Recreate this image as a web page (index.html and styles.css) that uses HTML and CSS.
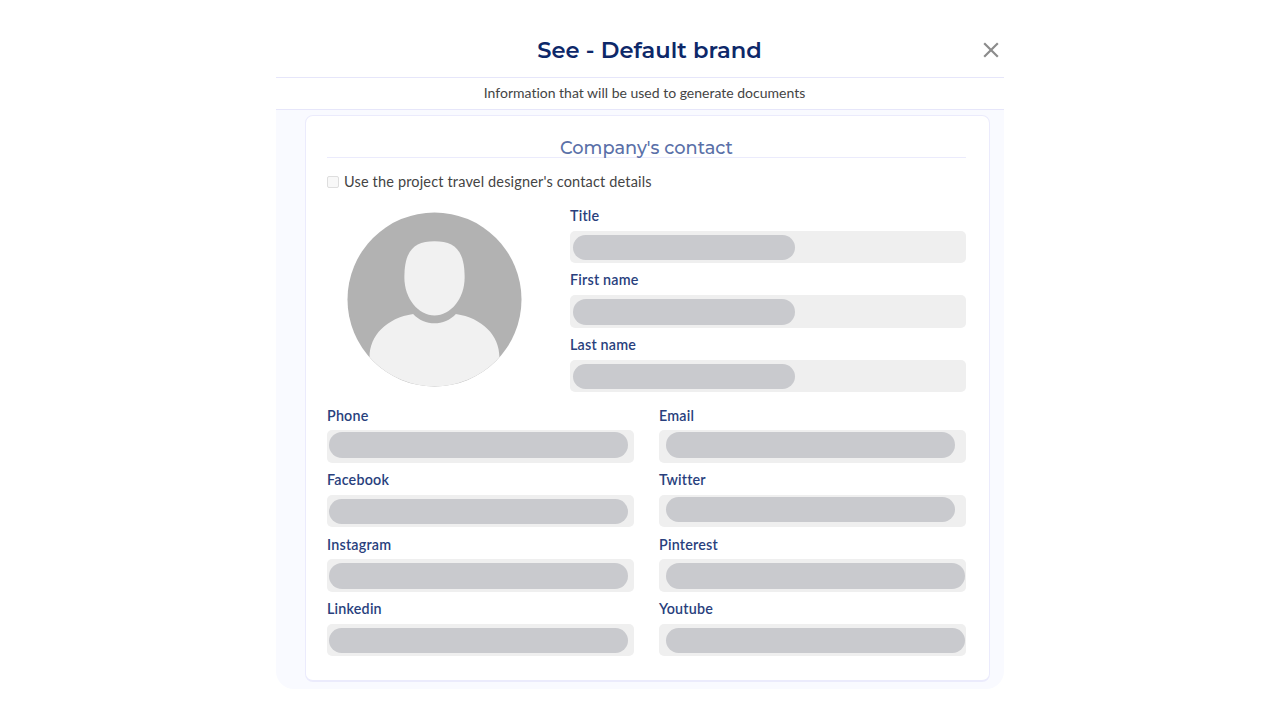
FILE: index.html
```html
<!DOCTYPE html>
<html lang="en">
<head>
    <meta charset="UTF-8">
    <meta name="viewport" content="width=device-width, initial-scale=1.0">
    <title>See - Default brand</title>
    <link rel="stylesheet" href="styles.css">
</head>
<body>

    <div class="modal">
        <div class="modal-header">
            <h1>See - Default brand</h1>
            <button type="button" class="close" aria-label="Close">
                <svg width="16" height="16" viewBox="0 0 16 16">
                    <path d="M1.2 1.2L14.800 14.800M14.800 1.2L1.2 14.800"/>
                </svg>
            </button>
        </div>
        <p class="modal-info"><span>Information that will be used to generate documents</span></p>

        <div class="modal-body">
            <div class="card">
                <h2><span>Company's contact</span></h2>
                <label class="check">
                    <input type="checkbox" disabled>
                    <span>Use the project travel designer's contact details</span>
                </label>

                <!-- Avatar and identity -->
                <div class="identity">
                    <svg class="avatar" viewBox="0 0 176 176">
                        <defs>
                            <clipPath id="round"><circle cx="88" cy="88" r="87.3"/></clipPath>
                        </defs>
                        <circle cx="88" cy="88" r="87.5" fill="#b2b2b2"/>
                        <g clip-path="url(#round)" fill="#f1f1f1">
                            <path d="M88 29.3C108 29.3 118.3 38 118.3 66C118.3 87 104 104 88 104C72 104 57.7 87 57.7 66C57.7 38 68 29.3 88 29.3Z"/>
                            <path d="M66.5 102.5C78 115 98 115 109.5 102.5C136 106.5 153.3 124 153.3 146V176H22.7V146C22.7 124 40 106.5 66.5 102.5Z"/>
                        </g>
                    </svg>
                    <div class="names">
                        <div class="field">
                            <label>Title</label>
                            <div class="input"><span class="value"></span></div>
                        </div>
                        <div class="field">
                            <label>First name</label>
                            <div class="input"><span class="value"></span></div>
                        </div>
                        <div class="field">
                            <label>Last name</label>
                            <div class="input"><span class="value"></span></div>
                        </div>
                    </div>
                </div>

                <!-- Contact and social networks -->
                <div class="contacts">
                    <div class="field">
                        <label>Phone</label>
                        <div class="input high"><span class="value"></span></div>
                    </div>
                    <div class="field right">
                        <label>Email</label>
                        <div class="input high"><span class="value short"></span></div>
                    </div>
                    <div class="field">
                        <label>Facebook</label>
                        <div class="input"><span class="value"></span></div>
                    </div>
                    <div class="field right">
                        <label>Twitter</label>
                        <div class="input high"><span class="value short"></span></div>
                    </div>
                    <div class="field">
                        <label>Instagram</label>
                        <div class="input"><span class="value"></span></div>
                    </div>
                    <div class="field right">
                        <label>Pinterest</label>
                        <div class="input"><span class="value"></span></div>
                    </div>
                    <div class="field">
                        <label>Linkedin</label>
                        <div class="input"><span class="value"></span></div>
                    </div>
                    <div class="field right">
                        <label>Youtube</label>
                        <div class="input"><span class="value"></span></div>
                    </div>
                </div>
            </div>
        </div>
    </div>

</body>
</html>
```
FILE: styles.css
```css
* {
    box-sizing: border-box;
}
body {
    margin: 0;
    background-color: #fff;
    font-family: Lato, "Open Sans", sans-serif;
    font-size: 14px;
    font-variant-ligatures: none;
    color: #444;
}
.modal {
    width: 728px;
    margin: 0 auto;
}
.modal-header {
    display: flex;
    align-items: center;
    height: 78px;
    padding: 22px 5px 0 40px;
    border-bottom: 1px solid #e6e6fa;
}
h1 {
    flex: 1;
    margin: 0;
    text-align: center;
    font-family: Montserrat, Inter, sans-serif;
    font-size: 22.6px;
    font-weight: 600;
    color: #0d2869;
}
.close {
    display: flex;
    padding: 0;
    border: none;
    background: none;
    cursor: pointer;
}
.close path {
    fill: none;
    stroke: #8c8c8c;
    stroke-width: 2.2;
}
.modal-info {
    margin: 0;
    height: 32px;
    padding-left: 9px;
    border-bottom: 1px solid #e6e6fa;
    line-height: 30px;
    text-align: center;
}
.modal-body {
    height: 579px;
    padding: 5px 14px 7px 29px;
    background-color: #f9faff;
    border-radius: 0 0 18px 18px;
}
.card {
    height: 567px;
    padding: 20px 23px 0 21px;
    border: 1px solid #ebebfc;
    border-bottom-width: 2px;
    border-radius: 8px;
    background-color: #fff;
}
h2 {
    margin: 0;
    height: 22px;
    border-bottom: 1px solid #ebebfc;
    line-height: 24px;
    text-align: center;
    font-family: Montserrat, Inter, sans-serif;
    font-size: 17.8px;
    font-weight: 500;
    color: #5a70a8;
}
.check {
    display: flex;
    align-items: center;
    gap: 5px;
    height: 47px;
    margin-bottom: 1px;
    font-size: 14.5px;
    letter-spacing: 0.16px;
}
.check input {
    appearance: none;
    width: 12px;
    height: 12px;
    margin: 0;
    border: 1px solid #dedede;
    border-radius: 2px;
    background-color: #f8f8f8;
}
.identity {
    display: flex;
    justify-content: space-between;
    height: 201px;
    padding-left: 20px;
}
.avatar {
    width: 175px;
    height: 175px;
    margin-top: 6px;
}
.names {
    width: 396px;
}
.field {
    height: 64.4px;
}
.field label {
    display: block;
    height: 25px;
    line-height: 20px;
    font-size: 14.3px;
    font-weight: 600;
    letter-spacing: 0.2px;
    color: #293f7d;
}
.input {
    display: flex;
    height: 32.4px;
    padding: 4px 0 0 3px;
    border-radius: 5px;
    background-color: #efefef;
}
.value {
    width: 222px;
    height: 25.4px;
    border-radius: 13px;
    background-color: #c9cace;
}
.contacts {
    display: grid;
    grid-template-columns: 1fr 1fr;
    column-gap: 25px;
}
.contacts .field label {
    height: 23.4px;
    line-height: 17px;
}
.contacts .input {
    padding-left: 2px;
}
.contacts .value {
    width: 299px;
}
.contacts .high {
    padding-top: 2px;
}
.contacts .right .input {
    padding-left: 7px;
}
.contacts .right .short {
    width: 289px;
}
```
